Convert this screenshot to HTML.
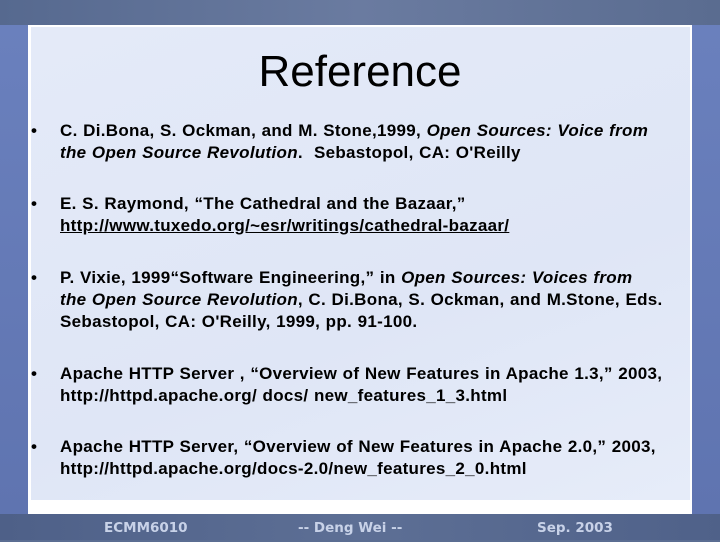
<!DOCTYPE html>
<html><head><style>
body{margin:0;width:720px;height:540px;position:relative;overflow:hidden;background:#5b6d92;font-family:"Liberation Sans",Arial,sans-serif}
.top{position:absolute;left:0;top:0;width:720px;height:25px;background:linear-gradient(90deg,#56698f,#6a7ba0,#5a6c90)}
.ls{position:absolute;left:0;top:25px;width:28px;height:490px;background:linear-gradient(#6a80bd,#5f74b0)}
.rs{position:absolute;left:692px;top:25px;width:28px;height:490px;background:linear-gradient(#6a80bd,#5f74b0)}
.wh{position:absolute;left:28px;top:25px;width:664px;height:489px;background:#fff}
.ct{position:absolute;left:31px;top:27px;width:659px;height:473px;background:linear-gradient(160deg,#e4eaf8,#dfe6f6 60%,#e6ecf9)}
.ft{position:absolute;left:0;top:514px;width:720px;height:26px;background:linear-gradient(90deg,#4e6088,#5d6f95,#4f6189);color:#c8d2e8;font-family:"DejaVu Sans",sans-serif;font-weight:bold;font-size:13.5px;line-height:28px}
.ft span{position:absolute;top:0}
h1{position:absolute;left:0;width:720px;top:47px;margin:0;text-align:center;font-weight:normal;font-size:44px;color:#000}
.b{position:absolute;left:31px;font-size:17px;font-weight:bold;line-height:22px;color:#000}
.b .d{position:absolute;left:0;top:0}
.b .t{position:absolute;left:29px;top:0;width:640px;white-space:nowrap;letter-spacing:0.3px;word-spacing:0.5px}
u{text-decoration:underline}
</style></head><body>
<div class="top"></div><div class="ls"></div><div class="rs"></div><div class="wh"></div><div class="ct"></div>
<h1>Reference</h1>
<div class="b" style="top:120px"><span class="d">•</span><div class="t">C. Di.Bona, S. Ockman, and M. Stone,1999, <i>Open Sources: Voice from<br>the Open Source Revolution</i>.&nbsp; Sebastopol, CA: O'Reilly</div></div>
<div class="b" style="top:193px"><span class="d">•</span><div class="t">E. S. Raymond, “The Cathedral and the Bazaar,”<br><u>http://www.tuxedo.org/~esr/writings/cathedral-bazaar/</u></div></div>
<div class="b" style="top:267px"><span class="d">•</span><div class="t">P. Vixie, 1999“Software Engineering,” in <i>Open Sources: Voices from<br>the Open Source Revolution</i>, C. Di.Bona, S. Ockman, and M.Stone, Eds.<br>Sebastopol, CA: O'Reilly, 1999, pp. 91-100.</div></div>
<div class="b" style="top:363px"><span class="d">•</span><div class="t">Apache HTTP Server , “Overview of New Features in Apache 1.3,” 2003,<br>http://httpd.apache.org/ docs/ new_features_1_3.html</div></div>
<div class="b" style="top:436px"><span class="d">•</span><div class="t">Apache HTTP Server, “Overview of New Features in Apache 2.0,” 2003,<br>http://httpd.apache.org/docs-2.0/new_features_2_0.html</div></div>
<div class="ft"><span style="left:104px">ECMM6010</span><span style="left:298px">-- Deng Wei --</span><span style="left:537px">Sep. 2003</span></div>
</body></html>
